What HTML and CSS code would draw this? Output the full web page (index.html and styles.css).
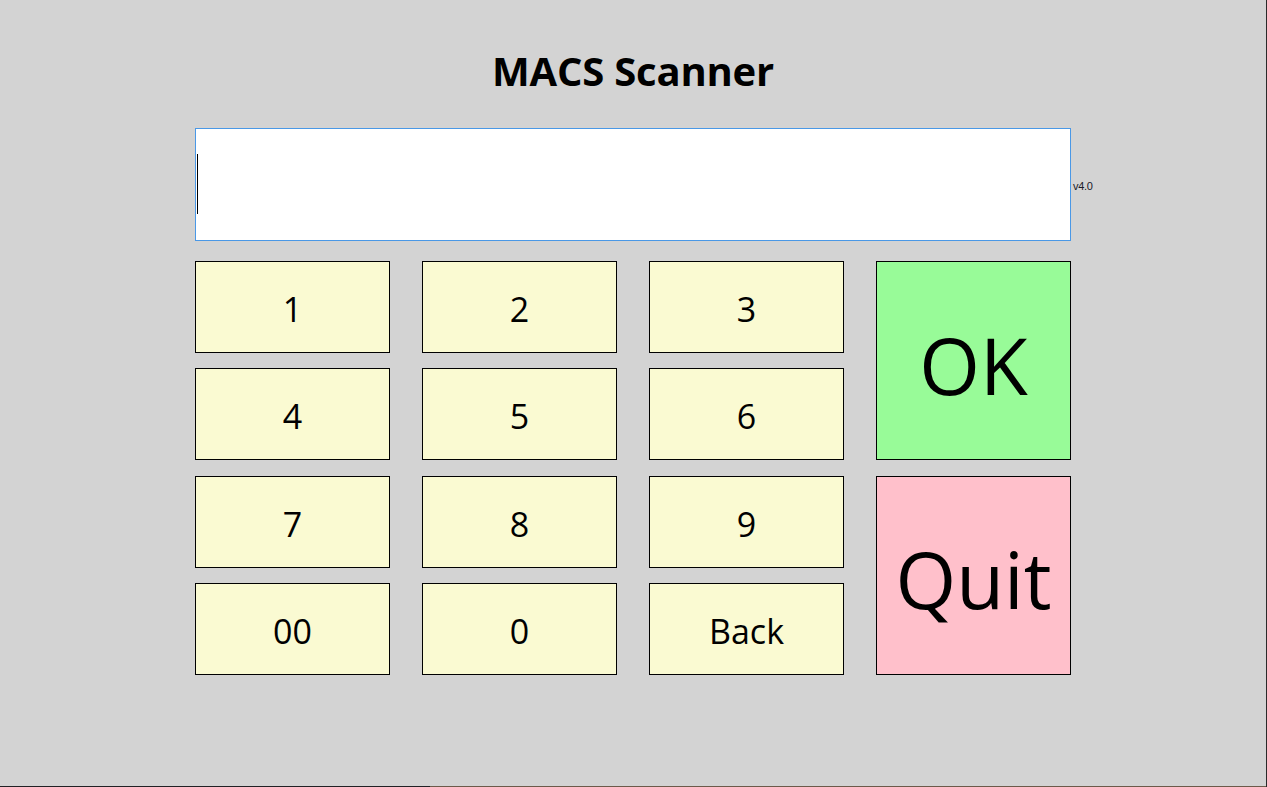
FILE: index.html
```html
<!DOCTYPE html>
<html lang="en">
<head>
<meta charset="utf-8">
<title>MACS Scanner</title>
<link rel="stylesheet" href="styles.css">
</head>
<body>
<div class="app">
  <h1 class="title">MACS Scanner</h1>
  <div class="entry-row">
    <div class="entry"><span class="caret"></span></div>
    <span class="version">v4.0</span>
  </div>
  <div class="keypad">
    <div class="key">1</div>
    <div class="key">2</div>
    <div class="key">3</div>
    <div class="key key-ok">OK</div>
    <div class="key">4</div>
    <div class="key">5</div>
    <div class="key">6</div>
    <div class="key">7</div>
    <div class="key">8</div>
    <div class="key">9</div>
    <div class="key key-quit">Quit</div>
    <div class="key">00</div>
    <div class="key">0</div>
    <div class="key">Back</div>
  </div>
  <div class="spacer"></div>
  <div class="edge"><span class="edge-dark"></span><span class="edge-brown"></span></div>
</div>
</body>
</html>
```

FILE: styles.css
```css
html, body {
  margin: 0;
  padding: 0;
  background: #d3d3d3;
}

body {
  width: 1267px;
  height: 787px;
  overflow: hidden;
  font-family: "Open Sans", "Noto Sans", sans-serif;
  color: #000;
}

.app {
  width: 1266px;
  height: 787px;
  border-right: 1px solid #2a2a2a;
  display: flex;
  flex-direction: column;
}

.title {
  margin: 0;
  padding-top: 50px;
  height: 42px;
  line-height: 42px;
  font-size: 40px;
  font-weight: 700;
  text-align: center;
  letter-spacing: -0.2px;
  margin-bottom: 36px;
}

.entry-row {
  display: grid;
  grid-template-columns: 195px 876px 1fr;
  align-items: center;
}

.entry {
  grid-column: 2;
  height: 111px;
  background: #fff;
  border: 1px solid #4a98e6;
  display: flex;
  align-items: flex-start;
}

.caret {
  width: 1px;
  height: 60px;
  margin-top: 25px;
  margin-left: 1px;
  background: #000;
}

.version {
  grid-column: 3;
  font-family: "Liberation Sans", Arial, sans-serif;
  font-size: 11px;
  letter-spacing: -0.3px;
  color: #1a1a2a;
  padding-left: 2px;
  margin-top: 2px;
}

.keypad {
  margin: 20px auto 0;
  width: 876px;
  display: grid;
  grid-template-columns: repeat(4, 195px);
  grid-template-rows: repeat(4, 92px);
  column-gap: 32px;
  row-gap: 15.333px;
}

.key {
  box-sizing: border-box;
  border: 1px solid #000;
  background: #fafad2;
  display: flex;
  align-items: center;
  justify-content: center;
  font-size: 34px;
  padding-top: 4px;
}

.key-ok {
  grid-column: 4;
  grid-row: 1 / span 2;
  background: #98fb98;
  font-size: 78px;
  padding-top: 8px;
}

.key-quit {
  grid-column: 4;
  grid-row: 3 / span 2;
  background: #ffc0cb;
  font-size: 78px;
  padding-top: 8px;
}

.spacer {
  flex: 1;
}

.edge {
  display: flex;
  height: 1px;
}

.edge-dark {
  width: 430px;
  background: #202124;
}

.edge-brown {
  flex: 1;
  background: #6b5a4a;
}
```
